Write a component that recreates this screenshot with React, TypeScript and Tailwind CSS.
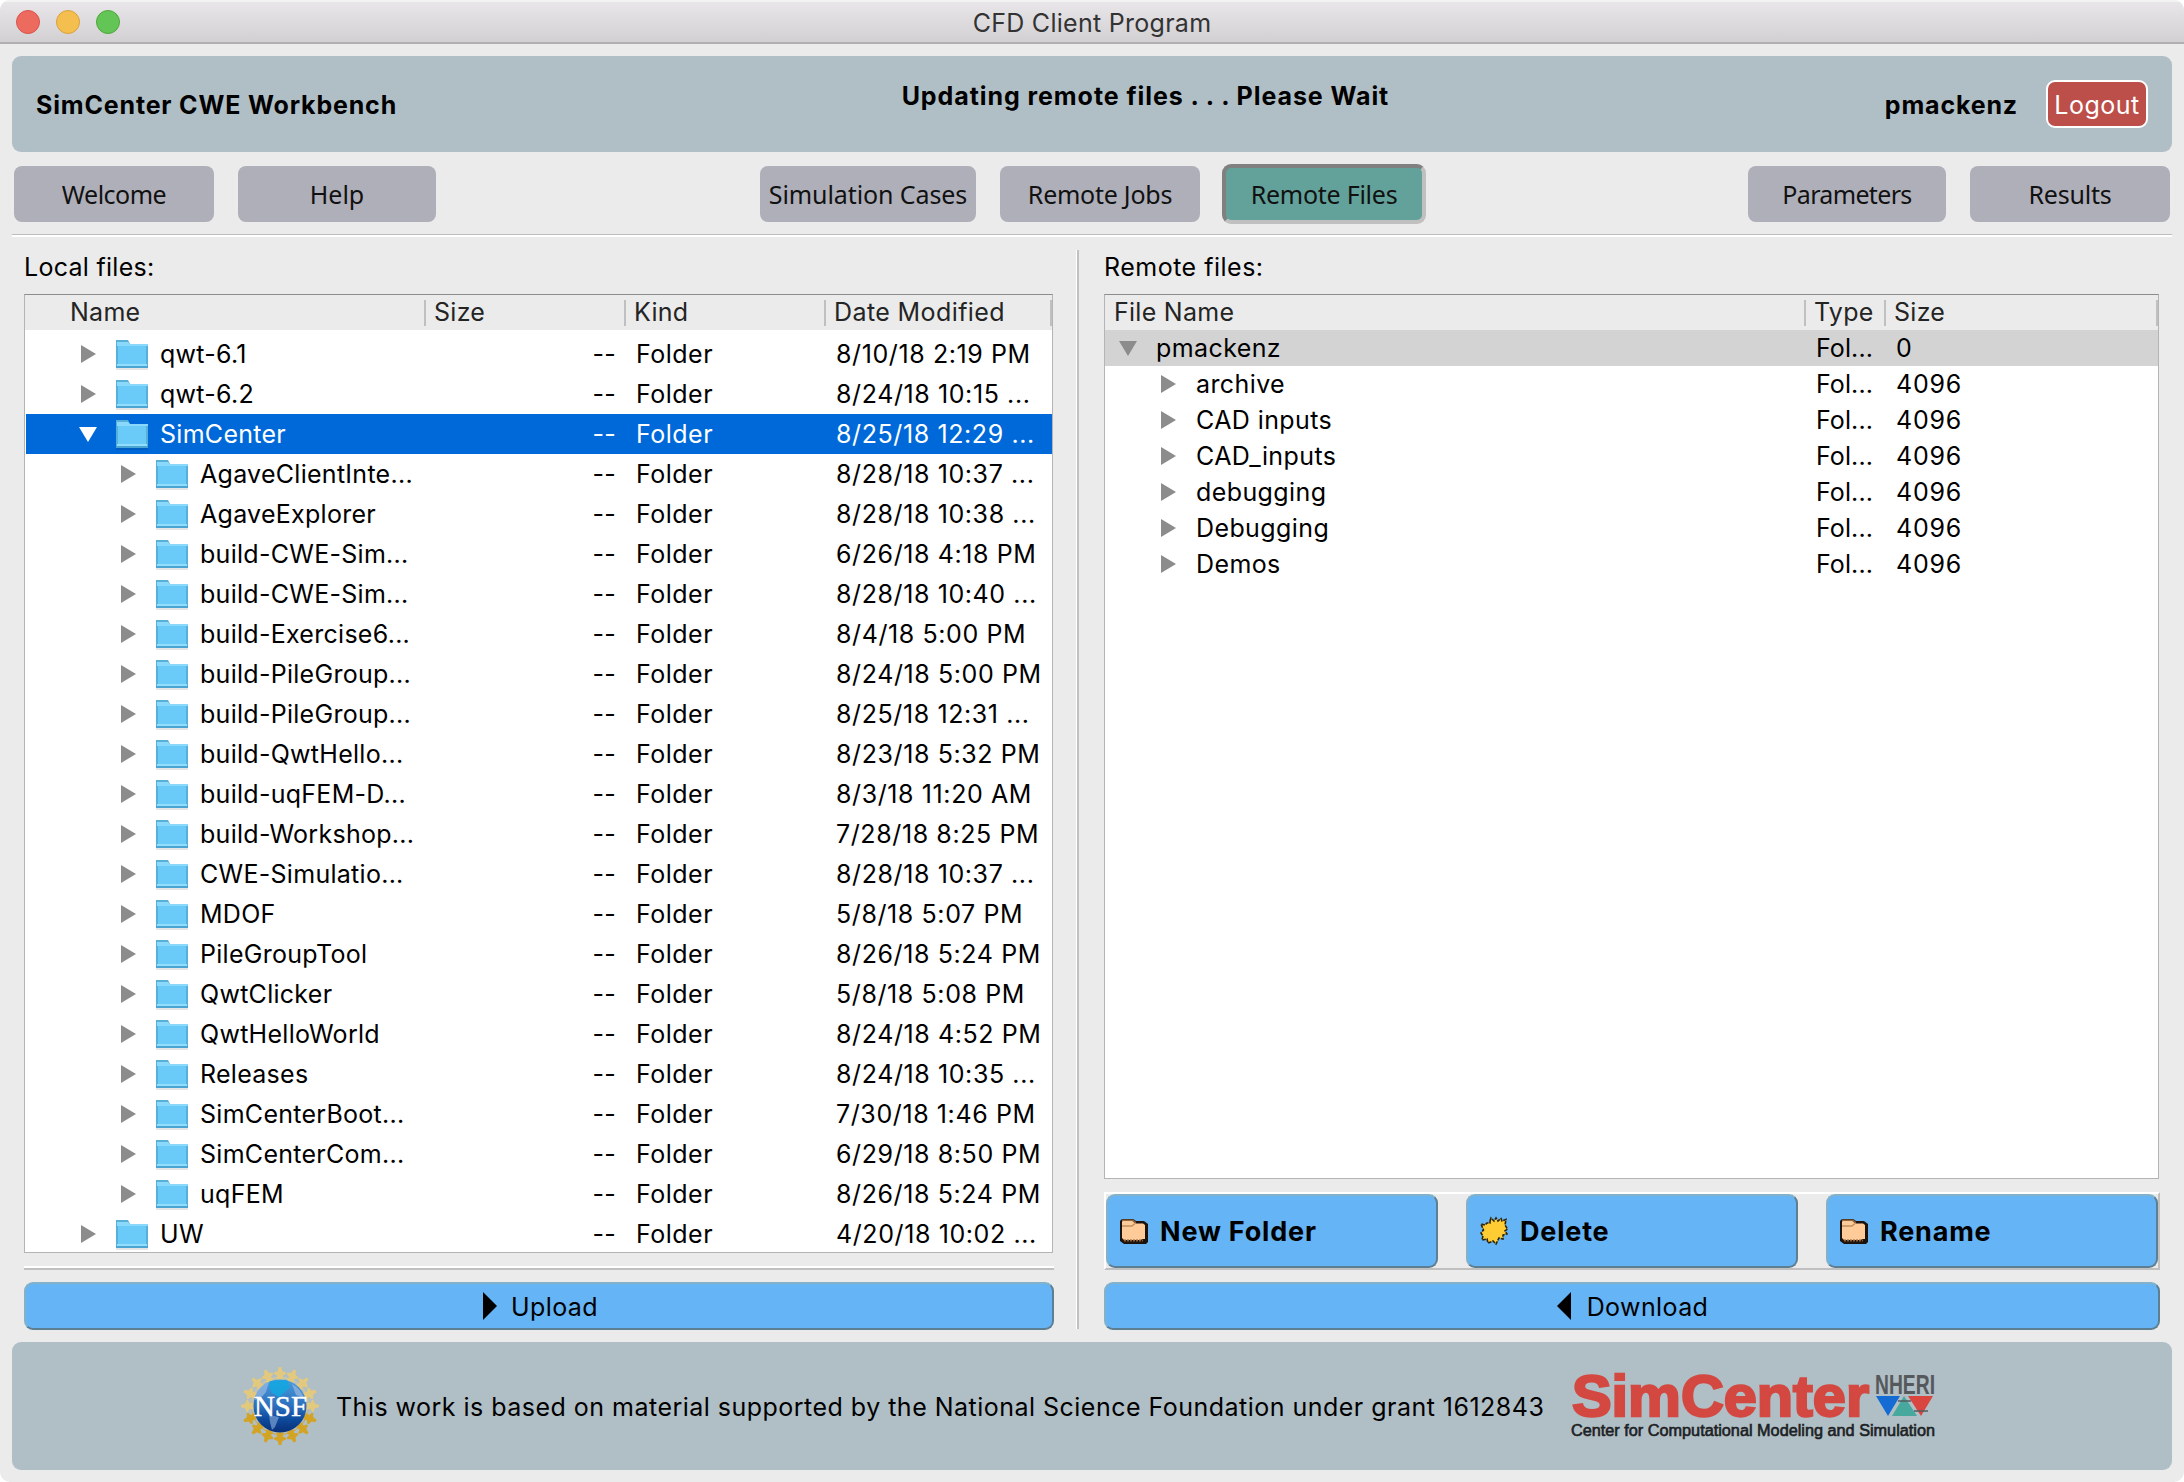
import React from "react";

type Row = { name: string; date: string; depth: number; open?: boolean };

const localRows: Row[] = [
  { name: "qwt-6.1", date: "8/10/18 2:19 PM", depth: 0 },
  { name: "qwt-6.2", date: "8/24/18 10:15 ...", depth: 0 },
  { name: "SimCenter", date: "8/25/18 12:29 ...", depth: 0, open: true },
  { name: "AgaveClientInte...", date: "8/28/18 10:37 ...", depth: 1 },
  { name: "AgaveExplorer", date: "8/28/18 10:38 ...", depth: 1 },
  { name: "build-CWE-Sim...", date: "6/26/18 4:18 PM", depth: 1 },
  { name: "build-CWE-Sim...", date: "8/28/18 10:40 ...", depth: 1 },
  { name: "build-Exercise6...", date: "8/4/18 5:00 PM", depth: 1 },
  { name: "build-PileGroup...", date: "8/24/18 5:00 PM", depth: 1 },
  { name: "build-PileGroup...", date: "8/25/18 12:31 ...", depth: 1 },
  { name: "build-QwtHello...", date: "8/23/18 5:32 PM", depth: 1 },
  { name: "build-uqFEM-D...", date: "8/3/18 11:20 AM", depth: 1 },
  { name: "build-Workshop...", date: "7/28/18 8:25 PM", depth: 1 },
  { name: "CWE-Simulatio...", date: "8/28/18 10:37 ...", depth: 1 },
  { name: "MDOF", date: "5/8/18 5:07 PM", depth: 1 },
  { name: "PileGroupTool", date: "8/26/18 5:24 PM", depth: 1 },
  { name: "QwtClicker", date: "5/8/18 5:08 PM", depth: 1 },
  { name: "QwtHelloWorld", date: "8/24/18 4:52 PM", depth: 1 },
  { name: "Releases", date: "8/24/18 10:35 ...", depth: 1 },
  { name: "SimCenterBoot...", date: "7/30/18 1:46 PM", depth: 1 },
  { name: "SimCenterCom...", date: "6/29/18 8:50 PM", depth: 1 },
  { name: "uqFEM", date: "8/26/18 5:24 PM", depth: 1 },
  { name: "UW", date: "4/20/18 10:02 ...", depth: 0 },
];

const remoteRows = ["archive", "CAD inputs", "CAD_inputs", "debugging", "Debugging", "Demos"];

function Arrow({ open, className }: { open?: boolean; className: string }) {
  return (
    <svg viewBox="0 0 20 20" className={"w-5 h-5 shrink-0 " + className} fill="currentColor">
      <path d={open ? "M1 3H19L10 18Z" : "M3 1L18 10L3 19Z"} />
    </svg>
  );
}

function Folder() {
  return (
    <svg viewBox="0 0 32 32" className="w-8 h-8 shrink-0">
      <rect x="0" y="30" width="32" height="2" fill="#000" opacity="0.1" />
      <path d="M0 2H12L14 6H32V30H0Z" fill="#58b0d9" />
      <path d="M1 4H12L14 6H32V8H1Z" fill="#8ad8fb" />
      <rect x="2" y="8" width="28" height="18" fill="#6bcbf8" />
      <rect x="1" y="26" width="30" height="2" fill="#92defd" />
      <rect x="0" y="28" width="32" height="2" fill="#4ba5d2" />
    </svg>
  );
}

function TanFolder() {
  return (
    <svg viewBox="0 0 28 30" className="w-7 h-[30px] shrink-0">
      <path d="M2 3H13L16 5H24L28 8V26L26 28H4L0 25V5Z" fill="#1c130c" />
      <path d="M2 3.500H13L16 6V8H2Z" fill="#94683f" />
      <path d="M3 5H12L15 7.500H23L25 9V23H22L21 24H4L2 22V6Z" fill="#ffcc99" />
      <path d="M2 10H12L15 7.500" stroke="#c2905f" strokeWidth="1.500" fill="none" />
      <path d="M4 24.500H23" stroke="#8a5f38" strokeWidth="1.800" strokeDasharray="2 1" fill="none" />
    </svg>
  );
}

function Burst() {
  return (
    <svg viewBox="0 0 28 30" className="w-7 h-[30px] shrink-0">
      <path
        d="M10 5L11 2L14 5L16 2L18 5L21 2.500L22 5L26 3.500L25 9L27.500 13L25 15L27 18L23 19L23 23L19 22L16 28L13 25L8 27L7 23L2 24L3 20L1 17L3.500 14L1 8L5 9L7 7L10 7Z"
        fill="#ffcc33"
        stroke="#2e2309"
        strokeWidth="1.600"
        strokeDasharray="3.500 1"
      />
    </svg>
  );
}

function NsfLogo() {
  const spikes = Array.from({ length: 16 }, (_, i) => i * 22.5);
  return (
    <svg viewBox="0 0 78 78" className="w-[78px] h-[78px] shrink-0">
      <defs>
        <linearGradient id="gold" gradientUnits="userSpaceOnUse" x1="0" y1="0" x2="0" y2="78">
          <stop offset="0" stopColor="#e6d08a" />
          <stop offset="0.450" stopColor="#dfc374" />
          <stop offset="0.700" stopColor="#d3a01c" />
          <stop offset="1" stopColor="#d0a436" />
        </linearGradient>
        <linearGradient id="globe" x1="0" y1="0" x2="0" y2="1">
          <stop offset="0" stopColor="#4c9ddb" />
          <stop offset="0.500" stopColor="#2c6fbd" />
          <stop offset="0.750" stopColor="#0d4a9c" />
          <stop offset="1" stopColor="#0a2f78" />
        </linearGradient>
      </defs>
      <circle cx="39" cy="39" r="28.500" fill="none" stroke="url(#gold)" strokeWidth="1" />
      {spikes.map((a) => {
        const t = (a * Math.PI) / 180;
        const down = (1 - Math.cos(t)) / 2;
        return (
          <path
            key={a}
            d="M37.700 0H40.300L41.200 4L45 5.500V7L41.800 8.500L42.500 12.500H35.500L36.200 8.500L33 7V5.500L36.800 4Z"
            transform={`rotate(${a} 39 39)`}
            fill={down > 0.55 ? "#d3a324" : "#e2c97e"}
          />
        );
      })}
      <circle cx="39" cy="39" r="26.500" fill="url(#globe)" />
      <path d="M29 14L46 13L49 20L43 26L38 30L31 26L28 20Z" fill="#14a5e0" opacity="0.900" />
      <path d="M15 27Q20 17 28 15L25 25Q20 32 14 33ZM51 17Q60 22 63 31L55 28Z" fill="#8fb3de" opacity="0.800" />
      <path d="M28 48L38 50L34 60L31 63L29 55Z" fill="#6e93cb" opacity="0.800" />
      <text
        x="39.500"
        y="49"
        textAnchor="middle"
        textLength="53"
        lengthAdjust="spacingAndGlyphs"
        fill="#fff"
        stroke="#fff"
        strokeWidth="0.500"
        className="font-['Liberation_Serif',serif] text-[29px] tracking-normal"
      >
        NSF
      </text>
    </svg>
  );
}

function SimCenterLogo() {
  return (
    <svg viewBox="0 0 366 70" className="w-[366px] h-[70px] shrink-0 overflow-visible tracking-normal">
      <text
        x="1"
        y="44.500"
        textLength="297"
        lengthAdjust="spacingAndGlyphs"
        fill="#d34840"
        stroke="#d34840"
        strokeWidth="2.400"
        className="font-['Liberation_Sans',sans-serif] font-bold text-[57px]"
      >
        SimCenter
      </text>
      <text
        x="304"
        y="23"
        textLength="60"
        lengthAdjust="spacingAndGlyphs"
        fill="#56595c"
        className="font-['Liberation_Sans',sans-serif] font-bold text-[28px]"
      >
        NHERI
      </text>
      <path d="M305 25H329L317 45Z" fill="#136bd3" />
      <path d="M337 25H362L350 45Z" fill="#d8463f" />
      <path d="M321 45L333 25L346 45Z" fill="#47a89d" />
      <path d="M327 30H340M343 40H357" stroke="#555b60" strokeWidth="1.500" />
      <text
        x="0"
        y="64.500"
        textLength="364"
        lengthAdjust="spacingAndGlyphs"
        fill="#1c2124"
        stroke="#1c2124"
        strokeWidth="0.600"
        className="font-['Liberation_Sans',sans-serif] text-[16px]"
      >
        Center for Computational Modeling and Simulation
      </text>
    </svg>
  );
}

function NavButton({ label, className, active }: { label: string; className: string; active?: boolean }) {
  return (
    <button
      className={
        "flex items-center justify-center shrink-0 whitespace-nowrap font-['Noto_Sans','Open_Sans',sans-serif] text-[25px] text-[#111] " +
        (active
          ? "h-[60px] rounded-[9px] border-4 border-t-[#808080] border-l-[#808080] border-r-[#c0c0c0] border-b-[#c0c0c0] bg-[#62a29b] "
          : "h-14 rounded-lg bg-[#afafb9] ") +
        className
      }
    >
      <span>{label}</span>
    </button>
  );
}

const raised =
  "border-2 border-t-[#82b1c9] border-l-[#82b1c9] border-r-[#5d7f91] border-b-[#5d7f91] bg-[#64b4f6] rounded-[9px]";

function HeadCell({ label, className }: { label: string; className: string }) {
  return (
    <div className={"flex h-full items-center shrink-0 " + className}>
      <span className="grow pb-0.5">{label}</span>
      <span className="h-[26px] w-0.5 bg-[#c0c0c0]" />
    </div>
  );
}

export default function App() {
  return (
    <div className="bg-white w-[2184px] h-[1482px] overflow-hidden font-['Inter',sans-serif] text-[25px] leading-[30px] tracking-[0.28px] text-black">
      <div className="flex flex-col w-full h-full overflow-hidden rounded-[10px] bg-[#ebebeb]">
        <header className="flex h-11 shrink-0 items-center border-t-2 border-t-[#f4f3f4] border-b-2 border-b-[#b1afb1] bg-linear-to-b from-[#e8e6e9] to-[#d2d0d3]">
          <div className="flex w-[160px] gap-4 pl-4">
            <span className="size-6 rounded-full border border-[#d9544c] bg-[#ed6a5e]" />
            <span className="size-6 rounded-full border border-[#d9a03c] bg-[#f5bf4f]" />
            <span className="size-6 rounded-full border border-[#4ea73c] bg-[#62c555]" />
          </div>
          <div className="grow pt-0.5 pr-[160px] text-center text-[#333]">CFD Client Program</div>
        </header>

        <div className="mx-3 mt-3 flex h-24 shrink-0 items-center rounded-[9px] bg-[#b0bec5] pl-6 pr-6 font-bold tracking-[0.83px]">
          <div className="w-[400px] pt-0.5">SimCenter CWE Workbench</div>
          <div className="grow pr-[87px] pb-4 pl-[57px] text-center tracking-[0.93px]">
            Updating remote files . . . Please Wait
          </div>
          <div className="mr-[28px] pt-0.5">pmackenz</div>
          <button className="flex h-12 w-[102px] items-center justify-center rounded-[9px] border-2 border-white bg-[#bc4f49] pt-0.5 font-normal tracking-[0.5px] text-white">
            Logout
          </button>
        </div>

        <nav className="mx-3 flex h-[82px] shrink-0 items-center px-0.5 pt-0.5">
          <NavButton label="Welcome" className="w-[200px] mr-6 tracking-[-0.5px]" />
          <NavButton label="Help" className="w-[198px] tracking-[0px]" />
          <NavButton label="Simulation Cases" className="w-[216px] ml-[324px] mr-6 tracking-[-0.1px]" />
          <NavButton label="Remote Jobs" className="w-[200px] mr-[22px] tracking-[-0.25px]" />
          <NavButton label="Remote Files" className="w-[204px] mr-auto tracking-[-0.25px]" active />
          <NavButton label="Parameters" className="w-[198px] mr-6 tracking-[-0.65px]" />
          <NavButton label="Results" className="w-[200px] tracking-[-0.2px]" />
        </nav>
        <div className="mx-3 h-[3px] shrink-0 border-t border-t-[#bdbdbd] bg-white" />

        <main className="flex h-[1105px] shrink-0 pl-6">
          <section className="flex w-[1030px] shrink-0 flex-col pt-[15px]">
            <h2 className="h-[42px] leading-[30px]">Local files:</h2>
            <div className="h-[959px] w-[1029px] overflow-hidden border border-[#b4b4b4] border-t-[#8c8c8c] bg-white">
              <div className="flex h-[35px] items-center bg-[#ebebeb] text-[#242424]">
                <HeadCell label="Name" className="w-[401px] pl-[45px]" />
                <HeadCell label="Size" className="w-[200px] pl-[8px]" />
                <HeadCell label="Kind" className="w-[200px] pl-[8px]" />
                <HeadCell label="Date Modified" className="w-[226px] pl-[8px] tracking-[0.4px]" />
              </div>
              <div className="pt-1 pl-px">
                {localRows.map((r, i) => (
                  <div
                    key={i}
                    className={"flex h-10 items-center whitespace-nowrap " + (r.open ? "bg-[#0069d9] text-white" : "")}
                  >
                    <div className={"flex w-[530px] shrink-0 items-center " + (r.depth ? "pl-[92px]" : "pl-[52px]")}>
                      <Arrow open={r.open} className={r.open ? "text-white" : "text-[#8c8c8c]"} />
                      <span className="mr-3 ml-[18px] flex">
                        <Folder />
                      </span>
                      {r.name}
                    </div>
                    <span className="w-[60px] text-right">--</span>
                    <span className="ml-5 w-[200px] tracking-[0.5px]">Folder</span>
                    <span className="tracking-[0.6px]">{r.date}</span>
                  </div>
                ))}
              </div>
            </div>
            <div className="mt-[13px] h-1 w-full shrink-0 border-t-2 border-b-2 border-t-white border-b-[#c0c0c0]" />
            <button className={"mt-3 flex h-12 w-full shrink-0 items-center justify-center gap-[13px] pl-0.5 " + raised}>
              <svg viewBox="0 0 16 28" className="h-7 w-4">
                <path d="M1 0L15 14L1 28Z" />
              </svg>
              <span className="pt-0.5 tracking-[0.4px]">Upload</span>
            </button>
          </section>

          <div className="mt-[13px] ml-[22px] h-[1079px] w-[3px] shrink-0 border-l border-l-white bg-[#c0c0c0]" />

          <section className="ml-[25px] flex w-[1056px] shrink-0 flex-col pt-[15px]">
            <h2 className="h-[42px] leading-[30px] tracking-[0.5px]">Remote files:</h2>
            <div className="h-[885px] w-[1055px] shrink-0 overflow-hidden border border-[#b4b4b4] border-t-[#8c8c8c] bg-white">
              <div className="flex h-[35px] items-center bg-[#ebebeb] text-[#242424]">
                <HeadCell label="File Name" className="w-[701px] pl-[9px]" />
                <HeadCell label="Type" className="w-[80px] pl-[8px]" />
                <HeadCell label="Size" className="w-[272px] pl-[8px]" />
              </div>
              <div className="flex h-9 items-center bg-[#d3d3d3]">
                <div className="flex w-[711px] items-center pl-[13px] tracking-[0.4px]">
                  <Arrow open className="mr-[18px] text-[#8c8c8c]" />
                  pmackenz
                </div>
                <span className="w-20 tracking-[0.1px]">Fol...</span>
                <span>0</span>
              </div>
              {remoteRows.map((name) => (
                <div key={name} className="flex h-9 items-center">
                  <div className="flex w-[711px] items-center pl-[53px] tracking-[0.4px]">
                    <Arrow className="mr-[18px] text-[#8c8c8c]" />
                    {name}
                  </div>
                  <span className="w-20 tracking-[0.1px]">Fol...</span>
                  <span className="tracking-[0.8px]">4096</span>
                </div>
              ))}
            </div>
            <div className="mt-[13px] flex h-[78px] shrink-0 justify-between border-2 border-t-white border-r-[#c0c0c0] border-b-[#c0c0c0] border-l-white text-[27px] font-bold tracking-[0.8px]">
              <button className={"flex w-[332px] items-center gap-3 pl-3 " + raised}>
                <TanFolder />
                <span className="pt-0.5">New Folder</span>
              </button>
              <button className={"flex w-[332px] items-center gap-3 pl-3 " + raised}>
                <Burst />
                <span className="pt-0.5">Delete</span>
              </button>
              <button className={"flex w-[332px] items-center gap-3 pl-3 " + raised}>
                <TanFolder />
                <span className="pt-0.5">Rename</span>
              </button>
            </div>
            <button className={"mt-3 flex h-12 w-full shrink-0 items-center justify-center gap-[15px] " + raised}>
              <svg viewBox="0 0 16 28" className="h-7 w-4">
                <path d="M15 0L1 14L15 28Z" />
              </svg>
              <span className="pt-0.5 tracking-[0.4px]">Download</span>
            </button>
          </section>
        </main>

        <footer className="mx-3 flex h-32 shrink-0 items-center rounded-[9px] bg-[#b0bec5] pl-[229px]">
          <NsfLogo />
          <span className="ml-[17px] w-[1235px] shrink-0 pt-0.5 whitespace-nowrap tracking-[0.48px]">
            This work is based on material supported by the National Science Foundation under grant 1612843
          </span>
          <SimCenterLogo />
        </footer>
      </div>
    </div>
  );
}
